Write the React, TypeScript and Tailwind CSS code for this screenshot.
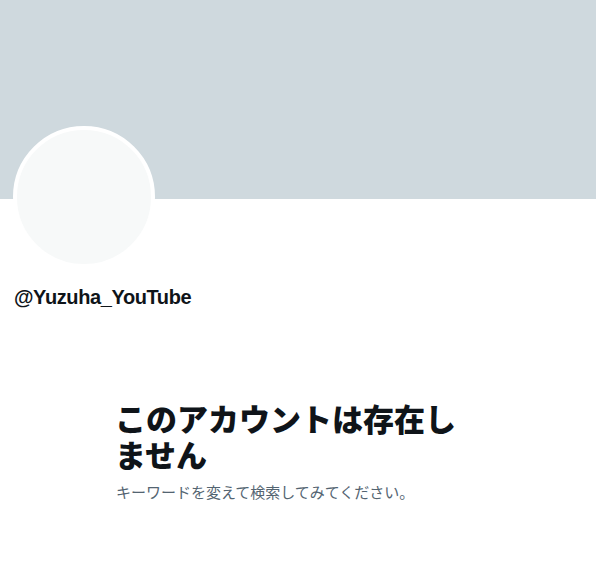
import React from "react";

const font = { fontFamily: '"Liberation Sans", "Noto Sans CJK JP", sans-serif' };

const Avatar = () => {
  return (
    <div className="ml-[13px] -mt-[73px] w-[142px] h-[142px] rounded-full border-4 border-white bg-[#f7f9f9]" />
  );
};

const EmptyState = () => {
  return (
    <section className="ml-[116px] mt-[94px] w-[360px]">
      <h2 className="-ml-[1px] text-[31px] leading-[36px] font-extrabold text-[#0f1419] mb-2">
        このアカウントは存在しません
      </h2>
      <p className="text-[15px] leading-5 text-[#536471]">
        キーワードを変えて検索してみてください。
      </p>
    </section>
  );
};

const App = () => {
  return (
    <main className="w-[596px] h-[576px] bg-white overflow-hidden" style={font}>
      <div className="h-[199px] bg-[#cfd9de]" />
      <Avatar />
      <div className="px-[14px] mt-[17px]">
        <h1 className="text-[20px] leading-6 font-bold tracking-[-0.4px] text-[#0f1419]">
          @Yuzuha_YouTube
        </h1>
      </div>
      <EmptyState />
    </main>
  );
};

export default App;
